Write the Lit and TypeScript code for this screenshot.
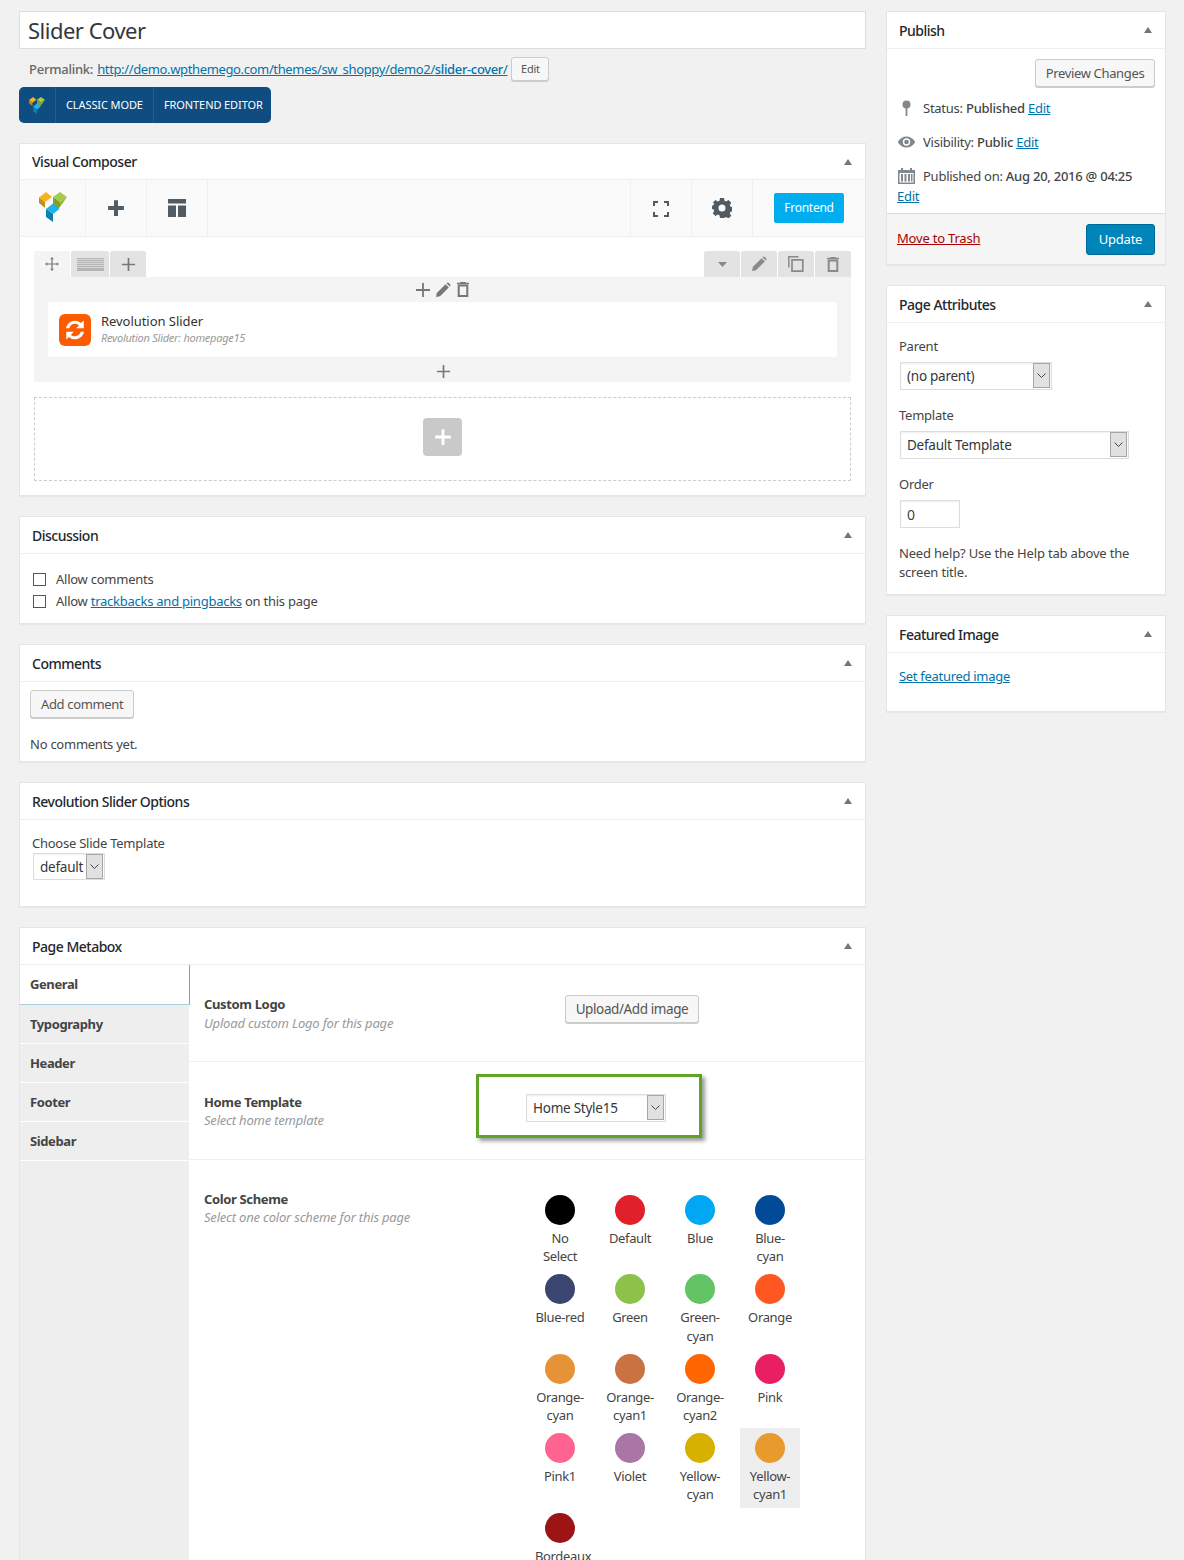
import {LitElement, css, html, svg} from "lit";
import {customElement} from "lit/decorators.js";

const SWATCHES = [
  ["No\nSelect", "#000000"], ["Default", "#e0202a"], ["Blue", "#00a8f3"], ["Blue-\ncyan", "#004a97"],
  ["Blue-red", "#3a4570"], ["Green", "#8cc24a"], ["Green-\ncyan", "#62c462"], ["Orange", "#ff5722"],
  ["Orange-\ncyan", "#e59336"], ["Orange-\ncyan1", "#cb7242"], ["Orange-\ncyan2", "#ff6600"], ["Pink", "#e91e63"],
  ["Pink1", "#ff6390"], ["Violet", "#a976a6"], ["Yellow-\ncyan", "#d6b100"], ["Yellow-\ncyan1", "#e89a2d"],
  ["Bordeaux", "#9c1414"],
];

const TABS = ["General", "Typography", "Header", "Footer", "Sidebar"];

const icon = (w: number, h: number, box: string, body: unknown) =>
  html`<svg width=${w} height=${h} viewBox=${box} style="display:block">${body}</svg>`;

const plus = (size: number, color: string, thick = 2) => icon(size, size, "0 0 16 16", svg`
  <path d="M8 1V15M1 8H15" stroke=${color} stroke-width=${thick} fill="none"/>`);

const pencil = (size: number, color: string) => icon(size, size, "0 0 16 16", svg`
  <path d="M1 15l.8-4L10.6 2.200l3.200 3.200L5 14.200zM11.500 1.300l.8-.6q.6-.4 1.200 0l1.800 1.800q.4.6 0 1.200l-.6.8z" fill=${color}/>`);

const trash = (w: number, h: number, color: string) => icon(w, h, "0 0 12 15", svg`
  <path d="M0 1.500H12M4 1.500V.5H8V1.500" stroke=${color} stroke-width="1.400" fill="none"/>
  <path d="M1.700 3.500H10.300V14H1.700z" stroke=${color} stroke-width="2" fill="none"/>`);

const copy = (size: number, color: string) => icon(size, size, "0 0 16 16", svg`
  <path d="M.8 11.500V.8H10.500" stroke=${color} stroke-width="1.500" fill="none"/>
  <path d="M4 3.800H14.800V15.200H4z" stroke=${color} stroke-width="1.700" fill="none"/>`);

const chevron = html`<svg width="9" height="5" viewBox="0 0 9 5" style="display:block"><path d="M.5.5L4.500 4.500L8.500.5" stroke="#444" fill="none"/></svg>`;

const vcLogo = (w: number, h: number) => icon(w, h, "0 0 28 30", svg`
  <polygon points="0,5.500 7,0 13,5 6,10" fill="#f9b21d"/>
  <polygon points="0,5.500 6,10 6,16 10.500,19.500 7,16.800 0,11" fill="#c78e12"/>
  <polygon points="14,5 21,0 28,5 21,10" fill="#a5cb46"/>
  <polygon points="14,5 21,10 21,15 14,20" fill="#7f9f2e"/>
  <polygon points="21,10 28,5 21,15" fill="#93b53a"/>
  <polygon points="7,17 14,11.500 20.500,17 14,22" fill="#1cb4ec"/>
  <polygon points="7,17 14,22 14,30 7,25" fill="#0b7fb0"/>`);

const section = (title: string, body: unknown, compact = false) => html`
  <section class="box">
    <header class=${compact ? "head compact" : "head"}>
      <h2>${title}</h2><i class="caret"></i>
    </header>
    ${body}
  </section>`;

const select = (label: string, width: number) => html`
  <div class="select" style="width:${width}px"><span>${label}</span><b>${chevron}</b></div>`;

@customElement("app-root")
export class AppRoot extends LitElement {
  static styles = css`
    :host {
      display: block;
      height: 1560px;
      overflow: hidden;
      background: #f1f1f1;
      color: #444;
      font: 13px/20px "Noto Sans", sans-serif;
      letter-spacing: -0.25px;
    }
    * { box-sizing: border-box; }
    a { color: #0073aa; text-decoration: underline; }
    .page {
      display: grid;
      grid-template-columns: 847px 280px;
      column-gap: 20px;
      padding: 11px 0 0 19px;
    }
    .title {
      height: 38px;
      padding-left: 8px;
      border: 1px solid #ddd;
      background: #fff;
      color: #32373c;
      font-size: 22px;
      line-height: 36px;
      letter-spacing: -0.5px;
    }
    .permalink {
      display: flex;
      align-items: center;
      height: 24px;
      margin-top: 8px;
      padding-left: 10px;
      color: #666;
    }
    .permalink strong { font-weight: 500; margin-right: 4px; }
    .permalink a { letter-spacing: -0.36px; }
    .permalink a b { font-weight: 500; }
    .mini {
      width: 38px;
      height: 24px;
      margin-left: 4px;
      border: 1px solid #ccc;
      border-radius: 3px;
      background: #f7f7f7;
      box-shadow: 0 1px 0 #ccc;
      color: #555;
      font-size: 11px;
      line-height: 22px;
      text-align: center;
    }
    .switch {
      display: flex;
      width: 252px;
      height: 36px;
      margin: 6px 0 20px;
      border-radius: 5px;
      background: #0f4c7f;
      color: #fff;
      font-size: 11px;
      line-height: 36px;
      letter-spacing: -0.1px;
    }
    .switch > div { flex: none; padding: 0 10px; border-left: 1px solid #1d6094; white-space: nowrap; }
    .switch .logo { width: 36px; padding: 10px 0 0 10px; border: 0; }
    .switch .classic { width: 98px; }
    .switch .front { width: 118px; }
    .box {
      margin-bottom: 20px;
      border: 1px solid #e5e5e5;
      background: #fff;
      box-shadow: 0 1px 1px rgba(0, 0, 0, .04);
    }
    .head {
      display: flex;
      align-items: center;
      justify-content: space-between;
      height: 37px;
      padding: 2px 13px 0 12px;
      border-bottom: 1px solid #eee;
    }
    .head.compact { height: 36px; padding-top: 0; }
    h2 { margin: 0; color: #23282d; font-size: 14px; font-weight: 500; letter-spacing: -0.5px; }
    .caret {
      width: 0;
      height: 0;
      margin-top: -2px;
      border: 4.5px solid transparent;
      border-top: 0;
      border-bottom: 6px solid #72777c;
    }
    .compact .caret { margin-top: 0; }
    .toolbar {
      display: flex;
      height: 57px;
      border-bottom: 1px solid #eee;
      background: #fafafa;
    }
    .tool {
      display: flex;
      align-items: center;
      justify-content: center;
      width: 61px;
      border-right: 1px solid #f0f0f0;
    }
    .tool.logo { width: 66px; padding: 0 0 2px 0; }
    .tool.expand { padding-top: 2px; }
    .toolbar .spacer { flex: 1; border-right: 1px solid #f0f0f0; }
    .tool.last { width: 112px; border: 0; justify-content: flex-start; padding-left: 21px; }
    .frontend {
      width: 70px;
      height: 30px;
      margin-top: -1px;
      border-radius: 2px;
      background: #00aef0;
      color: #fff;
      font-size: 12px;
      line-height: 29px;
      text-align: center;
    }
    .canvas { padding: 14px; }
    .tabs { display: flex; justify-content: space-between; height: 26px; }
    .tabs > div { display: flex; gap: 1px; }
    .tab {
      display: flex;
      align-items: center;
      justify-content: center;
      width: 36px;
      height: 26px;
      border-radius: 2px 2px 0 0;
      background: #e3e3e3;
    }
    .tab.first { background: #f4f4f4; }
    .tab.wide { width: 38px; }
    .vc-row {
      height: 105px;
      background: #f4f4f4;
    }
    .row-tools { display: flex; align-items: center; justify-content: center; gap: 4px; height: 25px; padding-right: 2px; }
    .row-tools .bin { margin-left: 2px; }
    .row-tools.single { padding: 3px 0 0 1px; }
    .element {
      display: flex;
      align-items: center;
      gap: 10px;
      height: 55px;
      margin: 0 14px;
      padding-left: 11px;
      border-radius: 2px;
      background: #fff;
    }
    .rev {
      display: flex;
      align-items: center;
      justify-content: center;
      width: 32px;
      height: 32px;
      border-radius: 6px;
      background: #fc5b00;
    }
    .el-name { color: #333; line-height: 17px; letter-spacing: -0.05px; }
    .el-sub { color: #999; font-size: 11px; font-style: italic; line-height: 16px; }
    .dash {
      display: flex;
      align-items: center;
      justify-content: center;
      height: 84px;
      margin-top: 15px;
      border: 1px dashed #ccc;
    }
    .add {
      display: flex;
      align-items: center;
      justify-content: center;
      width: 39px;
      height: 38px;
      margin-top: -4px;
      border-radius: 4px;
      background: #c9c9c9;
    }
    .discuss { padding: 14px 12px 11px 13px; }
    .check { display: flex; align-items: center; gap: 10px; height: 22px; }
    .check i { width: 13px; height: 13px; border: 1px solid #555; background: #fff; }
    .btn {
      display: inline-block;
      height: 28px;
      padding: 0 10px;
      border: 1px solid #ccc;
      border-radius: 3px;
      background: #f7f7f7;
      box-shadow: 0 1px 0 #ccc;
      color: #555;
      line-height: 26px;
      letter-spacing: -0.35px;
      text-align: center;
      white-space: nowrap;
    }
    .comments { padding: 8px 10px 7px; }
    .comments p { margin: 16px 0 0; }
    .rev-options { padding: 14px 12px 26px; line-height: 18px; }
    .select {
      display: flex;
      align-items: center;
      justify-content: space-between;
      height: 28px;
      padding: 0 1px 0 6px;
      border: 1px solid #ddd;
      background: #fff;
      box-shadow: inset 0 1px 2px rgba(0, 0, 0, .07);
      color: #32373c;
      font-size: 13.500px;
      letter-spacing: -0.25px;
    }
    .select b {
      display: flex;
      align-items: center;
      justify-content: center;
      width: 17px;
      height: 25px;
      margin-top: -1px;
      border: 1px solid #a6a6a6;
      background: #e1e1e1;
    }
    .rev-options .select { margin: 1px 0 0 1px; height: 27px; }
    .meta { display: grid; grid-template-columns: 170px 1fr; }
    .meta-tabs { width: 169px; background: #eee; }
    .meta-tab {
      height: 39px;
      padding-left: 10px;
      border-bottom: 1px solid #fff;
      color: #444;
      font-weight: 700;
      line-height: 39px;
      letter-spacing: -0.4px;
    }
    .meta-tab.on {
      width: 170px;
      height: 40px;
      border-right: 1px solid #6fa8cc;
      border-bottom: 1px solid #a8cfe4;
      background: #fff;
    }
    .meta-row {
      position: relative;
      display: grid;
      grid-template-columns: 322px 1fr;
      height: 97px;
      padding: 30px 0 0 14px;
      border-bottom: 1px solid #eee;
    }
    .meta-row.tall { height: 98px; padding-top: 31px; }
    .meta-row.open { height: 600px; border: 0; padding-top: 30px; }
    .field { color: #444; font-size: 13px; font-weight: 700; line-height: 18px; letter-spacing: -0.35px; }
    .hint { color: #999; font-size: 13px; font-style: italic; line-height: 18px; letter-spacing: -0.2px; }
    .meta-row.first .hint { margin-top: 1px; }
    .upload { margin-left: 39px; font-size: 13.500px; letter-spacing: -0.4px; width: 134px; padding: 0; }
    .meta-row .select { margin-top: 1px; }
    .callout {
      position: absolute;
      top: 12px;
      left: 286px;
      width: 226px;
      height: 64px;
      border: 3px solid #5fa327;
      box-shadow: 3px 3px 4px rgba(0, 0, 0, .4);
    }
    .swatches {
      display: grid;
      grid-template-columns: repeat(4, 60px);
      grid-auto-rows: 79.400px;
      column-gap: 10px;
      margin-left: 4px;
      align-self: start;
    }
    .swatch {
      display: flex;
      flex-direction: column;
      align-items: center;
      height: 80px;
      padding-top: 5px;
    }
    .swatch.on { background: #eee; }
    .swatch i { width: 30px; height: 30px; border-radius: 50%; flex: none; }
    .swatch span {
      width: 50px;
      margin-top: 4px;
      line-height: 18.200px;
      letter-spacing: -0.35px;
      text-align: center;
      white-space: pre-line;
    }
    .pub-actions { padding: 10px 10px 7px; }
    .pub-actions .top { display: flex; justify-content: flex-end; margin-bottom: 11px; }
    .pub-actions .btn { width: 120px; padding: 0; }
    .misc { display: flex; align-items: center; height: 20px; margin-bottom: 14px; white-space: nowrap; }
    .misc .ic { display: flex; justify-content: center; width: 19px; margin-right: 7px; }
    .misc b { font-weight: 500; }
    .misc.date { margin-bottom: 0; }
    .pub-foot {
      display: flex;
      align-items: center;
      justify-content: space-between;
      height: 51px;
      padding: 0 10px;
      border-top: 1px solid #ddd;
      background: #f5f5f5;
    }
    .trash { margin-top: -2px; color: #a00; letter-spacing: -0.2px; }
    .update {
      width: 69px;
      height: 31px;
      border: 1px solid #006799;
      border-radius: 3px;
      background: #0085ba;
      color: #fff;
      font-size: 13px;
      line-height: 28px;
      text-align: center;
    }
    .attrs { padding: 14px 12px 12px; }
    .attrs label { display: block; line-height: 18px; }
    .attrs .select { margin: 7px 0 16px 1px; }
    .attrs .order {
      width: 60px;
      height: 28px;
      margin: 7px 0 15px 1px;
      padding-left: 6px;
      border: 1px solid #ddd;
      box-shadow: inset 0 1px 2px rgba(0, 0, 0, .07);
      font-size: 14px;
      line-height: 27px;
    }
    .attrs p { margin: 0; line-height: 19px; letter-spacing: -0.18px; padding-top: 1px; }
    .featured { padding: 14px 12px 26px; line-height: 18px; letter-spacing: -0.3px; }
  `;

  private renderComposer() {
    return html`
      <div class="toolbar">
        <div class="tool logo">${vcLogo(28, 30)}</div>
        <div class="tool">${plus(18, "#525a62", 3.600)}</div>
        <div class="tool">${icon(18, 18, "0 0 18 18", svg`
          <path d="M0 0H18V4.500H0zM0 6.500H8V18H0zM10 6.500H18V18H10z" fill="#525a62"/>`)}</div>
        <div class="spacer"></div>
        <div class="tool expand">${icon(16, 16, "0 0 16 16", svg`
          <path d="M1 5V1H5M11 1H15V5M15 11V15H11M5 15H1V11" stroke="#525a62" stroke-width="2" fill="none"/>`)}</div>
        <div class="tool">${icon(20, 20, "0 0 20 20", svg`
          <path fill-rule="evenodd" fill="#525a62" d="M8 0h4l.5 2.700 1.700.7L16.500 1.900l2.800 2.800-1.500 2.300.7 1.700 2.700.5v4l-2.700.5-.7 1.700 1.500 2.300-2.800 2.800-2.300-1.500-1.700.7L12 20H8l-.5-2.700-1.700-.7-2.300 1.500L.7 15.300l1.500-2.300-.7-1.700L-1 10.800v-2.600l2.500-1 .7-1.700L.7 4.700 3.500 1.900l2.300 1.500 1.700-.7zM10 6.500a3.500 3.500 0 1 0 0 7 3.500 3.500 0 0 0 0-7z"/>`)}</div>
        <div class="tool last"><div class="frontend">Frontend</div></div>
      </div>
      <div class="canvas">
        <div class="tabs">
          <div>
            <div class="tab first">${icon(14, 14, "0 0 15 15", svg`
              <path d="M7.500 2V13M2 7.500H13" stroke="#777" stroke-width="1.300"/>
              <path d="M7.500 0l2 2.500h-4zM7.500 15l2-2.500h-4zM0 7.500l2.500-2v4zM15 7.500l-2.500-2v4z" fill="#777"/>`)}</div>
            <div class="tab wide">${icon(27, 13, "0 0 27 13", svg`
              <path d="M0 0H27V13H0z" fill="#b5b5b5"/>
              <path d="M0 1.500H27M0 3.500H27M0 5.500H27M0 7.500H27M0 9.500H27" stroke="#d5d5d5"/>`)}</div>
            <div class="tab">${plus(15, "#777", 1.800)}</div>
          </div>
          <div>
            <div class="tab">${icon(9, 5, "0 0 9 5", svg`<path d="M0 0H9L4.500 5z" fill="#888"/>`)}</div>
            <div class="tab">${pencil(16, "#8a8a8a")}</div>
            <div class="tab">${copy(16, "#8a8a8a")}</div>
            <div class="tab">${trash(12, 15, "#8a8a8a")}</div>
          </div>
        </div>
        <div class="vc-row">
          <div class="row-tools">
            ${plus(16, "#777", 1.800)}${pencil(16, "#777")}<span class="bin">${trash(12, 15, "#777")}</span>
          </div>
          <div class="element">
            <div class="rev">${icon(24, 24, "0 0 20 20", svg`
              <path fill="#fff" d="M2.500 8.500C3.300 4.700 6.400 2.200 10 2.200c2 0 3.700.8 5 2L17.300 2v6.500H11l2.400-2.400c-.9-.8-2.100-1.300-3.400-1.300-2.300 0-4.200 1.500-4.800 3.700zM17.500 11.500c-.8 3.800-3.900 6.300-7.500 6.300-2 0-3.700-.8-5-2L2.700 18v-6.500H9l-2.400 2.400c.9.800 2.100 1.300 3.400 1.300 2.300 0 4.200-1.500 4.800-3.700z"/>`)}</div>
            <div>
              <div class="el-name">Revolution Slider</div>
              <div class="el-sub">Revolution Slider: homepage15</div>
            </div>
          </div>
          <div class="row-tools single">${plus(15, "#777", 1.800)}</div>
        </div>
        <div class="dash"><div class="add">${plus(18, "#fff", 2.500)}</div></div>
      </div>`;
  }

  private renderMetabox() {
    return html`
      <div class="meta">
        <div class="meta-tabs">
          ${TABS.map((t, i) => html`<div class=${i === 0 ? "meta-tab on" : "meta-tab"}>${t}</div>`)}
        </div>
        <div>
          <div class="meta-row first">
            <div>
              <div class="field">Custom Logo</div>
              <div class="hint">Upload custom Logo for this page</div>
            </div>
            <div><span class="btn upload">Upload/Add image</span></div>
          </div>
          <div class="meta-row tall">
            <div>
              <div class="field">Home Template</div>
              <div class="hint">Select home template</div>
            </div>
            <div>${select("Home Style15", 140)}</div>
            <div class="callout"></div>
          </div>
          <div class="meta-row open">
            <div>
              <div class="field">Color Scheme</div>
              <div class="hint">Select one color scheme for this page</div>
            </div>
            <div class="swatches">
              ${SWATCHES.map(([name, color], i) => html`
                <div class=${i === 15 ? "swatch on" : "swatch"}>
                  <i style="background:${color}"></i><span>${name}</span>
                </div>`)}
            </div>
          </div>
        </div>
      </div>`;
  }

  private renderPublish() {
    return html`
      <div class="pub-actions">
        <div class="top"><span class="btn">Preview Changes</span></div>
        <div class="misc">
          <span class="ic">${icon(9, 16, "0 0 10 18", svg`
            <circle cx="5" cy="5" r="4.500" fill="#82878c"/><path d="M5 8V18" stroke="#82878c" stroke-width="2"/>`)}</span>
          Status:&nbsp;<b>Published</b>&nbsp;<a href="#">Edit</a>
        </div>
        <div class="misc">
          <span class="ic">${icon(19, 12, "0 0 19 13", svg`
            <path fill-rule="evenodd" fill="#82878c" d="M0 6.500C2.500 2.500 5.700.5 9.500.5s7 2 9.500 6c-2.500 4-5.700 6-9.500 6s-7-2-9.500-6zM9.500 2.500a4 4 0 1 0 0 8 4 4 0 0 0 0-8z"/>
            <circle cx="9.500" cy="6.500" r="2.500" fill="#82878c"/>`)}</span>
          Visibility:&nbsp;<b>Public</b>&nbsp;<a href="#">Edit</a>
        </div>
        <div class="misc date">
          <span class="ic">${icon(17, 16, "0 0 17 16", svg`
            <path fill-rule="evenodd" fill="#82878c" d="M0 2H3V0H5V2H12V0H14V2H17V16H0zM1.500 5V14.500H15.500V5z"/>
            <path fill="#82878c" d="M3 6H5V13.500H3zM6.500 6H8.500V13.500H6.500zM10 6H12V13.500H10zM13 6H14.500V13.500H13z"/>`)}</span>
          Published on:&nbsp;<b>Aug 20, 2016 @ 04:25</b>
        </div>
        <div><a href="#">Edit</a></div>
      </div>
      <div class="pub-foot">
        <a class="trash" href="#">Move to Trash</a>
        <div class="update">Update</div>
      </div>`;
  }

  render() {
    return html`
      <div class="page">
        <main>
          <div class="title">Slider Cover</div>
          <div class="permalink">
            <strong>Permalink:</strong>
            <a href="#">http://demo.wpthemego.com/themes/sw_shoppy/demo2/<b>slider-cover</b>/</a>
            <span class="mini">Edit</span>
          </div>
          <div class="switch">
            <div class="logo">${vcLogo(16, 17)}</div>
            <div class="classic">CLASSIC MODE</div>
            <div class="front">FRONTEND EDITOR</div>
          </div>
          ${section("Visual Composer", this.renderComposer(), true)}
          ${section("Discussion", html`
            <div class="discuss">
              <div class="check"><i></i>Allow comments</div>
              <div class="check"><i></i><span>Allow <a href="#">trackbacks and pingbacks</a> on this page</span></div>
            </div>`)}
          ${section("Comments", html`
            <div class="comments">
              <span class="btn">Add comment</span>
              <p>No comments yet.</p>
            </div>`)}
          ${section("Revolution Slider Options", html`
            <div class="rev-options">
              Choose Slide Template
              ${select("default", 72)}
            </div>`)}
          ${section("Page Metabox", this.renderMetabox())}
        </main>
        <aside>
          ${section("Publish", this.renderPublish())}
          ${section("Page Attributes", html`
            <div class="attrs">
              <label>Parent</label>
              ${select("(no parent)", 152)}
              <label>Template</label>
              ${select("Default Template", 229)}
              <label>Order</label>
              <div class="order">0</div>
              <p>Need help? Use the Help tab above the screen title.</p>
            </div>`)}
          ${section("Featured Image", html`
            <div class="featured"><a href="#">Set featured image</a></div>`)}
        </aside>
      </div>`;
  }
}
